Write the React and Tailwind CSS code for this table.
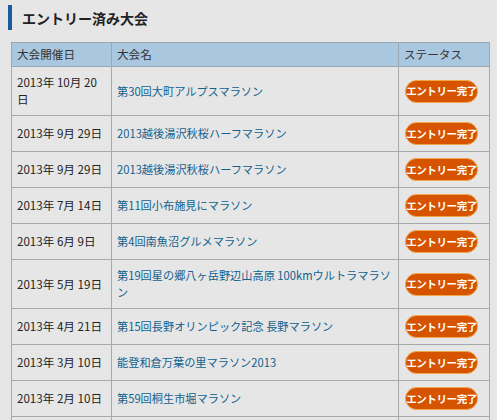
import React from 'react';

const rows = [
  { date: '2013年 10月 20日', name: ['第30回大町アルプスマラソン'], tall: true },
  { date: '2013年 9月 29日', name: ['2013越後湯沢秋桜ハーフマラソン'] },
  { date: '2013年 9月 29日', name: ['2013越後湯沢秋桜ハーフマラソン'] },
  { date: '2013年 7月 14日', name: ['第11回小布施見にマラソン'] },
  { date: '2013年 6月 9日', name: ['第4回南魚沼グルメマラソン'] },
  { date: '2013年 5月 19日', name: ['第19回星の郷八ヶ岳野辺山高原 100kmウルトラマラソ', 'ン'], tall: true },
  { date: '2013年 4月 21日', name: ['第15回長野オリンピック記念 長野マラソン'] },
  { date: '2013年 3月 10日', name: ['能登和倉万葉の里マラソン2013'] },
  { date: '2013年 2月 10日', name: ['第59回桐生市堀マラソン'] },
];

export default function App() {
  return (
    <div className="w-[497px] h-[420px] overflow-hidden bg-[#e6e6e6] text-[#222] text-[11.6px] font-['Noto_Sans_CJK_JP','Noto_Sans',sans-serif]">
      <div className="flex items-center h-[25px] mt-[5px] ml-[8px]">
        <div className="w-[4px] h-[25px] bg-[#1c5a9c]" />
        <h2 className="ml-[10px] text-[14px] font-bold leading-none">エントリー済み大会</h2>
      </div>
      <table className="mt-[12px] ml-[11px] w-[479px] border-collapse table-fixed">
        <thead>
          <tr className="h-[24px] bg-[#aac7e0] text-[#333]">
            <th className="w-[100px] border border-[#9aa8b4] px-[5px] text-left font-normal">大会開催日</th>
            <th className="w-[287px] border border-[#9aa8b4] px-[5px] text-left font-normal">大会名</th>
            <th className="border border-[#9aa8b4] px-[5px] text-left font-normal">ステータス</th>
          </tr>
        </thead>
        <tbody>
          {rows.map((r, i) => (
            <tr key={i} className={r.tall ? 'h-[49px]' : 'h-[36px]'}>
              <td className="border border-[#a8a8a8] px-[5px] leading-[17px]">{r.date}</td>
              <td className="border border-[#a8a8a8] px-[5px] leading-[17px] text-[11.2px] text-[#10628f]">
                {r.name.map((line, j) => (
                  <span key={j} className="block whitespace-nowrap">{line}</span>
                ))}
              </td>
              <td className="border border-[#a8a8a8] px-[6px]">
                <span className="inline-flex items-center justify-center w-[73px] h-[23px] rounded-full bg-[#d65300] border border-[#f1a64c] text-white text-[10.5px] font-bold tracking-[-0.4px] whitespace-nowrap">
                  エントリー完了
                </span>
              </td>
            </tr>
          ))}
          <tr className="h-[36px]">
            <td className="border border-[#a8a8a8]" />
            <td className="border border-[#a8a8a8]" />
            <td className="border border-[#a8a8a8]" />
          </tr>
        </tbody>
      </table>
    </div>
  );
}
